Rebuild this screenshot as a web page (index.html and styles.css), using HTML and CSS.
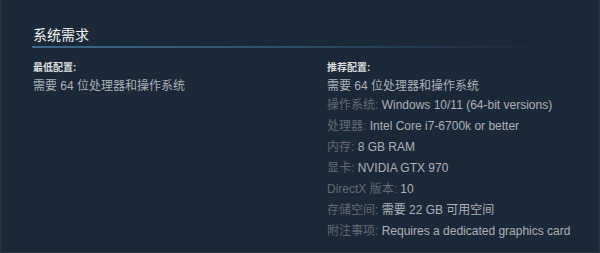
FILE: index.html
```html
<!DOCTYPE html>
<html lang="zh-CN">
<head>
  <meta charset="UTF-8" />
  <title>系统需求</title>
  <link rel="stylesheet" href="styles.css">
</head>
<body>
  <div class="sysreq">
    <h2 class="sysreq-title">系统需求</h2>

    <div class="sysreq-cols">
      <div class="sysreq-col">
        <div class="sysreq-head">最低配置:</div>
        <ul class="sysreq-list">
          <li>需要 64 位处理器和操作系统</li>
        </ul>
      </div>

      <div class="sysreq-col">
        <div class="sysreq-head">推荐配置:</div>
        <ul class="sysreq-list">
          <li>需要 64 位处理器和操作系统</li>
          <li><span class="label">操作系统:</span> Windows 10/11 (64-bit versions)</li>
          <li><span class="label">处理器:</span> Intel Core i7-6700k or better</li>
          <li><span class="label">内存:</span> 8 GB RAM</li>
          <li><span class="label">显卡:</span> NVIDIA GTX 970</li>
          <li><span class="label">DirectX 版本:</span> 10</li>
          <li><span class="label">存储空间:</span> 需要 22 GB 可用空间</li>
          <li><span class="label">附注事项:</span> Requires a dedicated graphics card</li>
        </ul>
      </div>
    </div>
  </div>
</body>
</html>
```

FILE: styles.css
```css
html, body {
  margin: 0;
  padding: 0;
}
body {
  font-family: "Liberation Sans", "Noto Sans CJK SC", sans-serif;
  background: #1b2838;
  color: #acb2b8;
  width: 600px;
  height: 253px;
  overflow: hidden;
}
.sysreq {
  box-sizing: border-box;
  width: 600px;
  height: 253px;
  padding: 24px 30px 0 31px;
  border-left: 1px solid #2a3544;
  border-right: 1px solid #2a3544;
  border-bottom: 1px solid #2a3544;
}
.sysreq-title {
  margin: 0;
  padding: 0 0 0 1px;
  font-size: 14px;
  font-weight: normal;
  line-height: 22px;
  height: 22px;
  border-bottom: 2px solid transparent;
  color: #f2f4f5;
  background: linear-gradient(to right, #3b6a8a 0%, #2e5069 45%, #1b2838 95%) left bottom / 100% 2px no-repeat;
  background-origin: border-box;
}
.sysreq-cols {
  display: flex;
  margin-top: 13px;
  padding-left: 1px;
}
.sysreq-col {
  flex: none;
  width: 294px;
}
.sysreq-head {
  font-size: 10px;
  font-weight: bold;
  line-height: 14px;
  color: #dcdedf;
  margin-bottom: 2px;
}
.sysreq-list {
  list-style: none;
  margin: 0;
  padding: 0;
  font-size: 12px;
}
.sysreq-list li {
  line-height: 19px;
  margin-bottom: 2px;
  white-space: nowrap;
}
.sysreq-list li:first-child {
  margin-bottom: 0;
}
.label {
  color: #626a73;
}
```
